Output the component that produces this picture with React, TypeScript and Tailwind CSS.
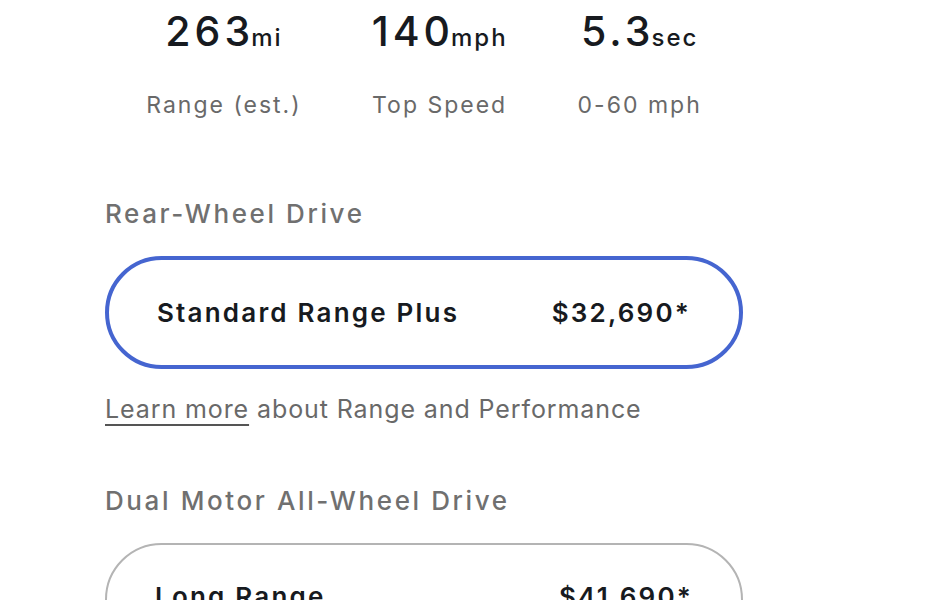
import React from "react";

const font = { fontFamily: "Inter, 'Noto Sans', sans-serif" };

function Stat({ value, unit, label }: { value: string; unit: string; label: string }) {
  return (
    <div className="flex flex-col items-center">
      <div className="flex items-baseline text-[#171a20]">
        <span className="-mr-[3px] text-[41px] font-medium leading-[48px] tracking-[4px]">{value}</span>
        <span className="text-[24px] font-medium tracking-[2px]">{unit}</span>
      </div>
      <div className="mt-[35px] text-[23px] leading-[28px] tracking-[2px] text-[#696969]">{label}</div>
    </div>
  );
}

export default function App() {
  return (
    <div className="h-[600px] w-[950px] overflow-hidden bg-white" style={font}>
      <div className="ml-[105px] w-[638px] pt-[7px]">
        <div className="flex justify-center gap-[70px]">
          <Stat value="263" unit="mi" label="Range (est.)" />
          <Stat value="140" unit="mph" label="Top Speed" />
          <Stat value="5.3" unit="sec" label="0-60 mph" />
        </div>
        <div className="mt-[79px] text-[26px] font-medium leading-[32px] tracking-[2.6px] text-[#707070]">
          Rear-Wheel Drive
        </div>
        <div className="mt-[26px] flex h-[113px] items-center justify-between rounded-full border-[4px] border-[#4565d0] px-[48px] text-[26px] font-semibold leading-[32px] tracking-[2.2px] text-[#171a20]">
          <span>Standard Range Plus</span>
          <span>$32,690*</span>
        </div>
        <div className="mt-[24px] text-[25px] leading-[32px] tracking-[0.9px] text-[#696969]">
          <span className="underline decoration-[#555555] decoration-2 underline-offset-[6px]">Learn more</span> about Range and Performance
        </div>
        <div className="mt-[60px] text-[26px] font-medium leading-[32px] tracking-[2.6px] text-[#707070]">
          Dual Motor All-Wheel Drive
        </div>
        <div className="mt-[26px] flex h-[113px] items-center justify-between rounded-full border-2 border-[#b4b4b4] px-[48px] pb-[6px] text-[26px] font-semibold leading-[32px] tracking-[2.2px] text-[#171a20]">
          <span>Long Range</span>
          <span>$41,690*</span>
        </div>
      </div>
    </div>
  );
}
